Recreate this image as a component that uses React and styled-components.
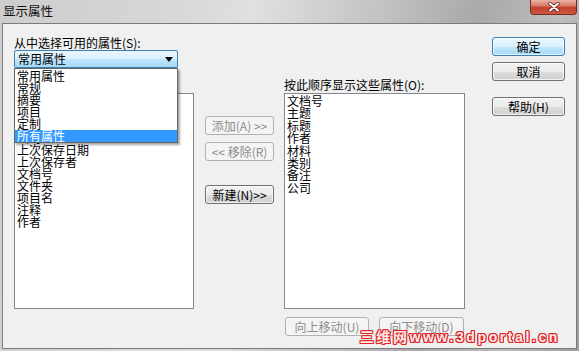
import styled, { createGlobalStyle } from 'styled-components'

const GlobalStyle = createGlobalStyle`
  html, body { margin: 0; padding: 0; }
  body { width: 579px; height: 351px; overflow: hidden; background: #c4c4c4; }
  * { box-sizing: border-box; }
`;

const Window = styled.div`
  position: relative;
  width: 579px;
  height: 351px;
  display: flex;
  flex-direction: column;
  background: linear-gradient(100deg, #cdcdcd 0%, #d6d6d6 25%, #e0e0e0 40%, #c2c2c2 60%, #a9a9a9 75%, #bdbdbd 88%, #9c9c9c 100%);
  font-family: "Noto Sans CJK SC", "Liberation Sans", sans-serif;
  font-size: 12px;
  color: #000;
`;

const TitleBar = styled.div`
  height: 23px;
  display: flex;
  justify-content: space-between;
  align-items: flex-start;
`;

const Title = styled.div`
  padding: 3px 0 0 3px;
  font-size: 12.5px;
  line-height: 15px;
  color: #111;
`;

const CloseButton = styled.div`
  width: 47px;
  height: 15px;
  margin-right: 2px;
  border: 1px solid #7a2c22;
  border-top: none;
  border-radius: 0 0 4px 4px;
  background: linear-gradient(#eab3a6, #d97b68 40%, #c2402c 55%, #cf5a44 100%);
  display: flex;
  align-items: center;
  justify-content: center;
`;

const Frame = styled.div`
  flex: 1;
  display: flex;
  padding: 0 2px 2px 2px;
`;

const Body = styled.div`
  flex: 1;
  display: flex;
  align-items: flex-start;
  background: #f0f0f0;
  border: 1px solid #7b7b7b;
  padding-left: 11px;
`;

const Column = styled.div`
  display: flex;
  flex-direction: column;
  width: ${p => p.$w}px;
  margin-left: ${p => p.$ml || 0}px;
  padding-top: ${p => p.$pt || 0}px;
`;

const Label = styled.div`
  height: 12px;
  line-height: 12px;
  white-space: nowrap;
`;

const ComboWrap = styled.div`
  position: relative;
  margin-top: 1px;
  z-index: 2;
`;

const Combo = styled.div`
  width: 164px;
  height: 18px;
  border: 1px solid #3c7fb1;
  border-radius: 2px;
  background: linear-gradient(#eaf6fd 0%, #d9f0fc 50%, #bee6fd 51%, #a7d9f5 100%);
  display: flex;
  align-items: center;
  justify-content: space-between;
  padding: 0 4px 0 3px;
  line-height: 16px;
`;

const Popup = styled.div`
  position: absolute;
  top: 100%;
  left: 0;
  width: 164px;
  height: 75px;
  background: #fff;
  border: 1px solid #646464;
  padding-top: 1px;
  box-shadow: 2px 2px 2px rgba(0, 0, 0, 0.35);
`;

const PopupItem = styled.div`
  height: 12px;
  line-height: 12px;
  padding-left: 2px;
  background: ${p => (p.$selected ? '#3399ff' : 'transparent')};
  color: ${p => (p.$selected ? '#fff' : '#000')};
`;

const ListBox = styled.div`
  margin-top: ${p => p.$mt}px;
  height: 216px;
  background: #fff;
  border: 1px solid #828790;
  padding: ${p => p.$pt}px 0 0 2px;
  overflow: hidden;
`;

const ListItem = styled.div`
  height: ${p => p.$h}px;
  line-height: ${p => p.$h}px;
  white-space: nowrap;
`;

const Button = styled.div`
  height: 19px;
  width: ${p => (p.$w ? `${p.$w}px` : '100%')};
  margin-top: ${p => p.$mt || 0}px;
  border: 1px solid ${p => (p.$disabled ? '#adb2b5' : p.$default ? '#3c7fb1' : '#707070')};
  border-radius: 3px;
  background: ${p =>
    p.$disabled
      ? '#f4f4f4'
      : p.$default
      ? 'linear-gradient(#eaf6fd 0%, #d9f0fc 50%, #bee6fd 51%, #a7d9f5 100%)'
      : 'linear-gradient(#f2f2f2 0%, #ebebeb 50%, #dddddd 51%, #cfcfcf 100%)'};
  box-shadow: inset 0 0 0 1px ${p => (p.$disabled ? 'transparent' : 'rgba(255,255,255,0.7)')};
  color: ${p => (p.$disabled ? '#8d8d8d' : '#000')};
  display: flex;
  align-items: center;
  justify-content: center;
  line-height: 17px;
  white-space: nowrap;
`;

const BottomRow = styled.div`
  display: flex;
  gap: 10px;
  margin-top: 8px;
  padding-left: 1px;
`;

const Watermark = styled.div`
  position: absolute;
  right: 19px;
  bottom: 7px;
  font-family: "Liberation Sans", "Noto Sans CJK SC", sans-serif;
  font-weight: bold;
  font-size: 14px;
  letter-spacing: 2.6px;
  line-height: 14px;
  color: #ffe9e9;
  text-shadow: 1px 0 0 #e02424, -1px 0 0 #e02424, 0 1px 0 #e02424, 0 -1px 0 #e02424,
    1px 1px 0 #e02424, -1px -1px 0 #e02424, 1px -1px 0 #e02424, -1px 1px 0 #e02424;
  white-space: nowrap;
`;

const available = ['常用属性', '常规', '摘要', '项目', '定制', '所有属性'];
const leftItems = ['备注', '标题', '材料', '公司', '上次保存日期', '上次保存者', '文档号', '文件夹', '项目名', '注释', '作者'];
const rightItems = ['文档号', '主题', '标题', '作者', '材料', '类别', '备注', '公司'];

export default function App() {
  return (
    <>
      <GlobalStyle />
      <Window>
        <TitleBar>
          <Title>显示属性</Title>
          <CloseButton>
            <svg width="12" height="10" viewBox="0 0 12 10">
              <path d="M2 1.5 L10 8.5 M10 1.5 L2 8.5" stroke="#5a1a12" strokeWidth="3.4" strokeLinecap="round" />
              <path d="M2 1.5 L10 8.5 M10 1.5 L2 8.5" stroke="#fff" strokeWidth="2" strokeLinecap="round" />
            </svg>
          </CloseButton>
        </TitleBar>
        <Frame>
          <Body>
            <Column $w={180} $pt={13}>
              <Label>从中选择可用的属性(S):</Label>
              <ComboWrap>
                <Combo>
                  <span>常用属性</span>
                  <svg width="8" height="5" viewBox="0 0 8 5">
                    <path d="M0 0 H8 L4 5 Z" fill="#000" />
                  </svg>
                </Combo>
                <Popup>
                  {available.map(item => (
                    <PopupItem key={item} $selected={item === '所有属性'}>{item}</PopupItem>
                  ))}
                </Popup>
              </ComboWrap>
              <ListBox $mt={25} $pt={2}>
                {leftItems.map(item => (
                  <ListItem key={item} $h={12}>{item}</ListItem>
                ))}
              </ListBox>
            </Column>

            <Column $w={69} $ml={11} $pt={92}>
              <Button $disabled>添加(A) &gt;&gt;</Button>
              <Button $disabled $mt={7}>&lt;&lt; 移除(R)</Button>
              <Button $mt={24}>新建(N)&gt;&gt;</Button>
            </Column>

            <Column $w={181} $ml={10} $pt={55}>
              <Label>按此顺序显示这些属性(O):</Label>
              <ListBox $mt={2} $pt={1}>
                {rightItems.map(item => (
                  <ListItem key={item} $h={12.4}>{item}</ListItem>
                ))}
              </ListBox>
              <BottomRow>
                <Button $disabled $w={84}>向上移动(U)</Button>
                <Button $disabled $w={85}>向下移动(D)</Button>
              </BottomRow>
            </Column>

            <Column $w={73} $ml={27} $pt={13}>
              <Button $default>确定</Button>
              <Button $mt={6}>取消</Button>
              <Button $mt={16}>帮助(H)</Button>
            </Column>
          </Body>
        </Frame>
        <Watermark>三维网www.3dportal.cn</Watermark>
      </Window>
    </>
  );
}
